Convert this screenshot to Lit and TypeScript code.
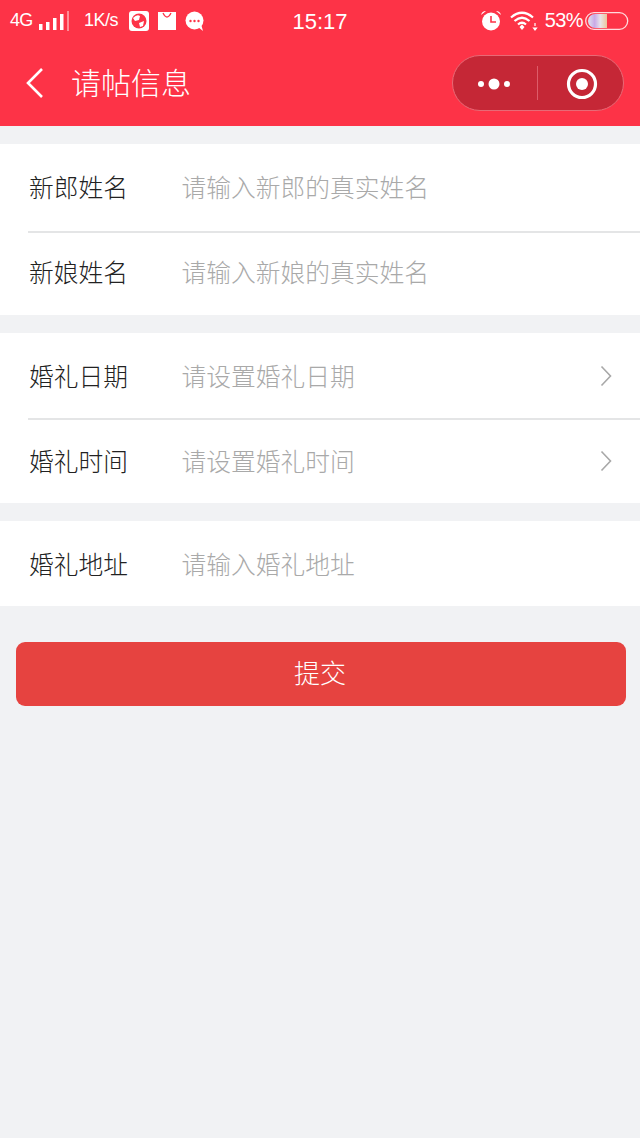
import { LitElement, html, css } from "lit";
import { customElement } from "lit/decorators.js";

const F = (label: string, ph: string, arrow = false) => html`
  <div class="row">
    <div class="label">${label}</div>
    <div class="ph">${ph}</div>
    ${arrow ? html`<svg class="chev" width="12" height="22" viewBox="0 0 12 22"><path d="M1.5 1.5 L10.5 11 L1.5 20.5" fill="none" stroke="#a8a8a8" stroke-width="1.6"/></svg>` : ""}
  </div>`;

@customElement("app-root")
export class AppRoot extends LitElement {
  static styles = css`
    :host { display: block; width: 640px; height: 1138px; background: #f1f2f4; overflow: hidden;
      font-family: "Noto Sans CJK SC", "Liberation Sans", sans-serif; }
    .head { background: #fd3347; height: 126px; color: #fff; display: flex; flex-direction: column; }
    .status { height: 41px; display: flex; align-items: center; padding: 0 11px 0 10px; position: relative; font-family: "Liberation Sans", sans-serif; }
    .left, .right { display: flex; align-items: center; }
    .right { margin-left: auto; }
    .s4g { font-size: 18px; letter-spacing: -0.8px; width: 23px; }
    .speed { font-size: 18px; margin-left: 15px; letter-spacing: -0.5px; width: 40px; white-space: nowrap; }
    .clock { position: absolute; left: 0; right: 0; text-align: center; font-size: 22px; top: 9px; }
    .pct { font-size: 20px; letter-spacing: -0.6px; margin-left: 7px; }
    .nav { flex: 1; display: flex; align-items: center; padding: 0 16px 2px 25px; }
    .title { font-size: 30px; margin-left: 26px; margin-bottom: 4px; font-weight: 300; line-height: 1; }
    .capsule { margin-left: auto; width: 172px; height: 56px; box-sizing: border-box; border-radius: 28px; background: #c52736; border: 1px solid #e86a76; display: flex; align-items: center; }
    .capsule .half { flex: 1; display: flex; align-items: center; justify-content: center; padding-top: 2px; }
    .capsule .half.dots { padding-right: 2px; }
    .capsule .half.target { padding-left: 3px; }
    .sep { width: 1px; height: 34px; background: #dd5c69; }
    .group { background: #fff; margin-top: 18px; }
    .row { height: 85px; display: flex; align-items: center; padding: 0 28px 2px 29px; position: relative; font-size: 24.75px; font-weight: 300; box-sizing: border-box; }
    .row + .row::before { content: ""; position: absolute; left: 28px; right: 0; top: 0; height: 2px; background: #e4e5e6; }
    .g1 .row + .row { height: 86px; }
    .g1 .row + .row::before { top: 2px; }
    .label { width: 152.5px; color: #222; white-space: nowrap; }
    .ph { color: #a9a9a9; flex: 1; white-space: nowrap; }
    .chev { display: block; margin-top: 2px; }
    .btn { margin: 36px 14px 0 16px; height: 64px; box-sizing: border-box; padding: 0 2px 6px 0; border-radius: 9px; background: #e64340; color: #fff; font-size: 26px; font-weight: 300; display: flex; align-items: center; justify-content: center; }
  `;

  render() {
    return html`
      <div class="head">
        <div class="status">
          <div class="left">
            <span class="s4g">4G</span>
            <svg width="30" height="20" viewBox="0 0 30 20" style="margin-left:6px">
              <rect x="0" y="13" width="3.5" height="6" fill="#fff"/><rect x="7" y="11" width="3.5" height="8" fill="#fff"/>
              <rect x="14" y="7" width="3.5" height="12" fill="#fff"/><rect x="21" y="3" width="3.5" height="16" fill="#fff"/>
              <rect x="28" y="0" width="2" height="20" fill="#ff8d97"/>
            </svg>
            <span class="speed">1K/s</span>
            <svg width="20" height="20" viewBox="0 0 20 20" style="margin-left:5px">
              <rect width="20" height="20" rx="3" fill="#fff"/><circle cx="10" cy="10" r="7.5" fill="#fd3347"/>
              <path d="M4 7 Q8 3 11 5 L10 9 L6 10Z M10 12 L15 10 L14 15 L11 16Z" fill="#fff"/>
            </svg>
            <svg width="18" height="20" viewBox="0 0 18 20" style="margin-left:9px">
              <path d="M0 1 H18 V19 H0Z" fill="#fff"/>
              <path d="M5 2 Q9 10 13 2" stroke="#fd3347" stroke-width="1.3" fill="none"/>
            </svg>
            <svg width="19" height="20" viewBox="0 0 19 20" style="margin-left:9px">
              <circle cx="9.5" cy="9.5" r="9" fill="#fff"/><path d="M13 16 L18 20 L16 13Z" fill="#fff"/>
              <circle cx="5.5" cy="10" r="1.2" fill="#fd3347"/><circle cx="9.5" cy="10" r="1.2" fill="#fd3347"/><circle cx="13.5" cy="10" r="1.2" fill="#fd3347"/>
            </svg>
          </div>
          <div class="clock">15:17</div>
          <div class="right">
            <svg width="22" height="21" viewBox="0 0 22 21">
              <circle cx="11" cy="11.5" r="9" fill="#fff"/>
              <path d="M1 5 Q2 1 6 1 Z M21 5 Q20 1 16 1 Z" fill="#fff"/>
              <path d="M11 6 V12 H16" fill="none" stroke="#fd3347" stroke-width="1.6"/>
            </svg>
            <svg width="28" height="20" viewBox="0 0 28 20" style="margin-left:8px">
              <path d="M1 6.5 Q12 -3 23 6.5 M4.5 10 Q12 3.5 19.5 10 M8 13.5 Q12 10 16 13.5" fill="none" stroke="#fff" stroke-width="2.2"/>
              <path d="M9.5 16 L12 13.5 L14.5 16 L12 19Z" fill="#fff"/>
              <path d="M25 12 V15 M23.5 17 L25 19 L26.5 17Z" stroke="#fff" fill="#fff" stroke-width="1.2"/>
            </svg>
            <span class="pct">53%</span>
            <svg width="44" height="20" viewBox="0 0 44 20" style="margin-left:2px">
              <defs><linearGradient id="bg" x1="0" x2="1"><stop offset="0" stop-color="#dfe4ee"/><stop offset="0.35" stop-color="#c9a9e6"/><stop offset="0.65" stop-color="#e8e4ea"/><stop offset="1" stop-color="#ecc59c"/></linearGradient></defs>
              <rect x="0.7" y="1.7" width="42" height="16.6" rx="8.3" fill="none" stroke="#ffdadd" stroke-width="1.3"/>
              <path d="M10 3 H22 V17 H10 A7 7 0 0 1 10 3Z" fill="url(#bg)"/>
            </svg>
          </div>
        </div>
        <div class="nav">
          <svg width="20" height="32" viewBox="0 0 20 32"><path d="M17 2 L3 16 L17 30" fill="none" stroke="#fff" stroke-width="2.6"/></svg>
          <div class="title">请帖信息</div>
          <div class="capsule">
            <div class="half dots">
              <svg width="36" height="14" viewBox="0 0 36 14"><circle cx="5" cy="7" r="3" fill="#fff"/><circle cx="18" cy="7" r="5.5" fill="#fff"/><circle cx="31" cy="7" r="3" fill="#fff"/></svg>
            </div>
            <div class="sep"></div>
            <div class="half target">
              <svg width="32" height="32" viewBox="0 0 32 32"><circle cx="16" cy="16" r="13.5" fill="none" stroke="#fff" stroke-width="3.2"/><circle cx="16" cy="16" r="6" fill="#fff"/></svg>
            </div>
          </div>
        </div>
      </div>
      <div class="group g1">${F("新郎姓名", "请输入新郎的真实姓名")}${F("新娘姓名", "请输入新娘的真实姓名")}</div>
      <div class="group">${F("婚礼日期", "请设置婚礼日期", true)}${F("婚礼时间", "请设置婚礼时间", true)}</div>
      <div class="group">${F("婚礼地址", "请输入婚礼地址")}</div>
      <div class="btn">提交</div>
    `;
  }
}
